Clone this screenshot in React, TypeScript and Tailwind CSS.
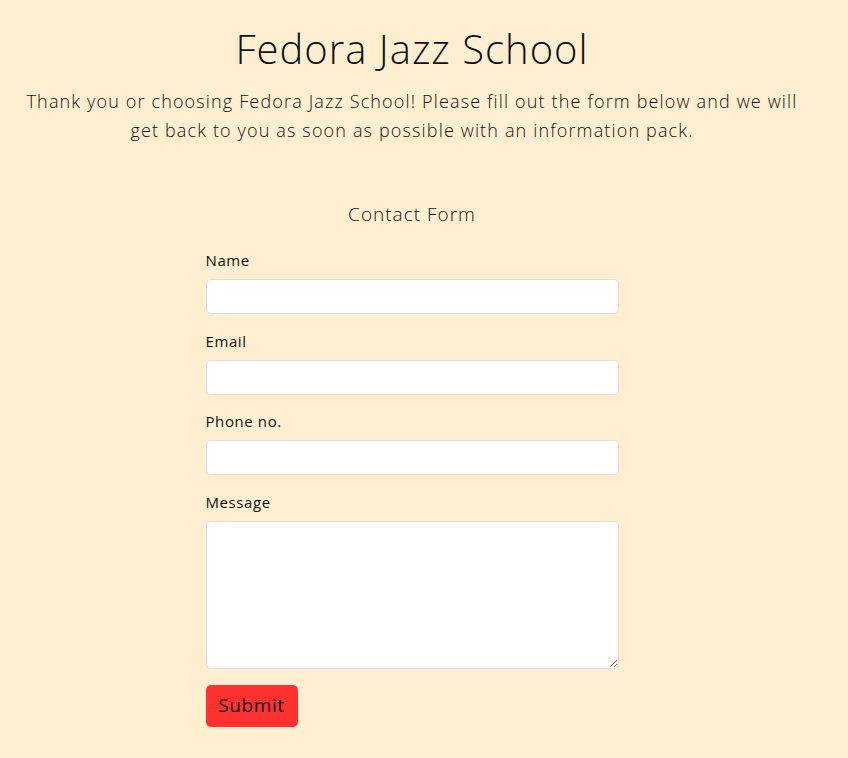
export default function App() {
  const fields = ["Name", "Email", "Phone no."];
  return (
    <div className="min-h-screen w-full bg-[#ffefd0] text-[#111] font-['Open_Sans',sans-serif]">
      <div className="w-[824px] flex flex-col items-center pt-[25px]">
        <h1 className="text-[40px] leading-[48px] font-light tracking-[1px]">Fedora Jazz School</h1>
        <p className="mt-[14px] text-[18px] leading-[29px] font-light text-center tracking-[1.15px]">
          Thank you or choosing Fedora Jazz School! Please fill out the form below and we will
          <br />
          get back to you as soon as possible with an information pack.
        </p>
        <h2 className="mt-[56px] text-[19px] leading-[26px] font-light tracking-[1px]">Contact Form</h2>
        <form className="w-[413px] mt-[22px] flex flex-col">
          {fields.map((f) => (
            <div key={f} className="flex flex-col mb-[15.5px]">
              <label className="text-[15px] leading-[22px] mb-[8px] tracking-[0.6px]">{f}</label>
              <input className="h-[35px] bg-white border border-[#dedede] rounded-[5px] outline-none px-2" />
            </div>
          ))}
          <div className="flex flex-col pt-[0.5px]">
            <label className="text-[15px] leading-[22px] mb-[8px] tracking-[0.6px]">Message</label>
            <textarea className="h-[148px] bg-white border border-[#dedede] rounded-[5px] outline-none px-2" />
          </div>
          <button type="button" className="mt-[15.5px] w-[92px] h-[42px] bg-[#ff3131] rounded-[5px] text-[19px] font-medium tracking-[0.6px] text-[#111]">
            Submit
          </button>
        </form>
      </div>
    </div>
  );
}
